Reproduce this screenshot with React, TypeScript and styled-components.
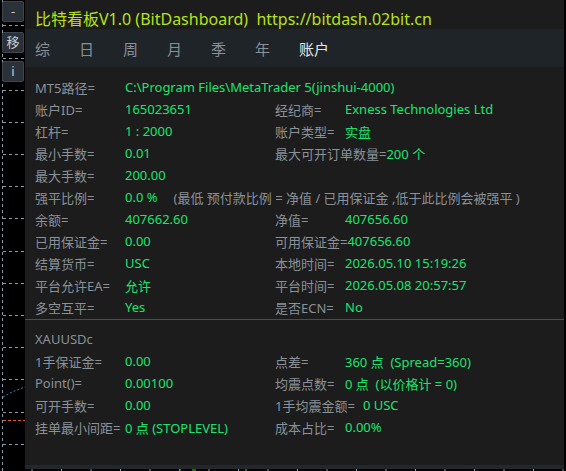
import React from "react";
import styled, { createGlobalStyle } from "styled-components";

const GlobalStyle = createGlobalStyle`
  html, body {
    margin: 0;
    padding: 0;
    background: #000;
  }
  body {
    font-family: "Noto Sans", "Noto Sans CJK SC", sans-serif;
  }
`;

type Pair = { label: string; value?: string; note?: string; gap?: number };
type Line = { left: Pair; right?: Pair; wide?: boolean };

const tabs = ["综", "日", "周", "月", "季", "年", "账户"];

const accountRows: Line[] = [
  { left: { label: "MT5路径=", value: "C:\\Program Files\\MetaTrader 5(jinshui-4000)" }, wide: true },
  { left: { label: "账户ID=", value: "165023651" }, right: { label: "经纪商=", value: "Exness Technologies Ltd" } },
  { left: { label: "杠杆=", value: "1 : 2000" }, right: { label: "账户类型=", value: "实盘" } },
  { left: { label: "最小手数=", value: "0.01" }, right: { label: "最大可开订单数量=", value: "200 个" } },
  { left: { label: "最大手数=", value: "200.00" } },
  {
    left: {
      label: "强平比例=",
      value: "0.0 %",
      note: "(最低 预付款比例 = 净值 / 已用保证金 ,低于此比例会被强平 )",
    },
    wide: true,
  },
  { left: { label: "余额=", value: "407662.60" }, right: { label: "净值=", value: "407656.60" } },
  { left: { label: "已用保证金=", value: "0.00" }, right: { label: "可用保证金=", value: "407656.60" } },
  { left: { label: "结算货币=", value: "USC" }, right: { label: "本地时间=", value: "2026.05.10 15:19:26" } },
  { left: { label: "平台允许EA=", value: "允许" }, right: { label: "平台时间=", value: "2026.05.08 20:57:57" } },
  { left: { label: "多空互平=", value: "Yes" }, right: { label: "是否ECN=", value: "No" } },
];

const symbolRows: Line[] = [
  { left: { label: "1手保证金=", value: "0.00" }, right: { label: "点差=", value: "360 点  (Spread=360)" } },
  { left: { label: "Point()=", value: "0.00100" }, right: { label: "均震点数=", value: "0 点  (以价格计 = 0)" } },
  { left: { label: "可开手数=", value: "0.00" }, right: { label: "1手均震金额=", value: "0 USC", gap: 8 } },
  { left: { label: "挂单最小间距=", value: "0 点 (STOPLEVEL)" }, right: { label: "成本占比=", value: "0.00%" } },
];

export default function App() {
  return (
    <>
      <GlobalStyle />
      <Chart>
        <ChartGrid />
        <SideTools>
          <ToolButton>-</ToolButton>
          <ToolButton $top={32}>移</ToolButton>
          <ToolButton $top={61}>i</ToolButton>
        </SideTools>
        <Panel>
          <Title>比特看板V1.0 (BitDashboard)  https://bitdash.02bit.cn</Title>
          <TabBar>
            {tabs.map((tab) => (
              <Tab key={tab} $active={tab === "账户"}>
                {tab}
              </Tab>
            ))}
          </TabBar>
          <Body>
            <Section>
              {accountRows.map((row, i) => (
                <InfoRow key={i} line={row} />
              ))}
            </Section>
            <Divider />
            <Section>
              <Row>
                <Label>XAUUSDc</Label>
              </Row>
              {symbolRows.map((row, i) => (
                <InfoRow key={i} line={row} />
              ))}
            </Section>
          </Body>
          <Footer />
        </Panel>
      </Chart>
    </>
  );
}

function InfoRow({ line }: { line: Line }) {
  const { left, right, wide } = line;
  return (
    <Row>
      <Cell $wide={wide}>
        <Label $min={90}>{left.label}</Label>
        <Value>{left.value}</Value>
        {left.note && <Note>{left.note}</Note>}
      </Cell>
      {right && (
        <Cell>
          <Label $min={70}>{right.label}</Label>
          <Value style={right.gap ? { marginLeft: right.gap } : undefined}>
            {right.value}
          </Value>
        </Cell>
      )}
    </Row>
  );
}

function ChartGrid() {
  const rows = [25, 58, 90, 122, 154, 186, 218, 251, 283, 315, 347, 379, 412, 444];
  const ticks = Array.from({ length: 19 }, (_, i) => 32 + i * 29.5);
  return (
    <GridSvg width="566" height="471" viewBox="0 0 566 471">
      <line x1="2.5" y1="0" x2="2.5" y2="471" stroke="#8a9aa8" strokeDasharray="3 3" />
      {rows.map((y) => (
        <line key={y} x1="3" y1={y + 0.5} x2="25" y2={y + 0.5} stroke="#8a9aa8" strokeDasharray="3 3" />
      ))}
      <polyline points="3,397 10,393 17,390 25,387" fill="none" stroke="#2f7fd6" strokeDasharray="2 2" />
      <line x1="3" y1="420.5" x2="25" y2="420.5" stroke="#e8502a" strokeDasharray="3 2" />
      {ticks.map((x) => (
        <line key={x} x1={x} y1="469" x2={x} y2="471" stroke="#8a9aa8" />
      ))}
      {[180, 193, 195, 246].map((x) => (
        <line key={x} x1={x} y1="467" x2={x} y2="471" stroke="#22e01a" />
      ))}
    </GridSvg>
  );
}

const Chart = styled.div`
  position: relative;
  width: 566px;
  height: 471px;
  background: #000;
  overflow: hidden;
`;

const GridSvg = styled.svg`
  position: absolute;
  left: 0;
  top: 0;
`;

const SideTools = styled.div`
  position: absolute;
  left: 2px;
  top: 0;
  width: 22px;
`;

const ToolButton = styled.div<{ $top?: number }>`
  position: absolute;
  left: 0;
  top: ${(p) => p.$top ?? 1}px;
  width: 22px;
  height: 21px;
  box-sizing: border-box;
  display: flex;
  align-items: center;
  justify-content: center;
  background: #2a3139;
  border: 1px solid #3d464f;
  border-radius: 2px;
  color: #c9ced3;
  font-size: 13px;
  line-height: 1;
`;

const Panel = styled.div`
  position: absolute;
  left: 25px;
  top: 0;
  width: 539px;
  height: 469px;
  display: flex;
  flex-direction: column;
  background: #1c1c1c;
`;

const Title = styled.div`
  height: 29px;
  padding: 6px 0 0 10px;
  box-sizing: border-box;
  color: #b6e21e;
  font-size: 16px;
  line-height: 26px;
  white-space: pre;
`;

const TabBar = styled.div`
  height: 38px;
  display: flex;
  align-items: center;
  padding-left: 10px;
  background: #1f2429;
`;

const Tab = styled.div<{ $active?: boolean }>`
  width: 44px;
  color: ${(p) => (p.$active ? "#e4e7ea" : "#899097")};
  font-size: 15px;
  white-space: nowrap;
`;

const Body = styled.div`
  flex: 1;
  padding-top: 9px;
`;

const Section = styled.div`
  display: flex;
  flex-direction: column;
  padding-left: 10px;
`;

const Row = styled.div`
  height: 22px;
  display: flex;
  align-items: center;
  font-size: 13px;
  white-space: pre;
`;

const Cell = styled.div<{ $wide?: boolean }>`
  display: flex;
  align-items: center;
  width: ${(p) => (p.$wide ? "auto" : "240px")};
`;

const Label = styled.span<{ $min?: number }>`
  min-width: ${(p) => p.$min ?? 0}px;
  color: #8a9199;
`;

const Value = styled.span`
  color: #1ee36f;
`;

const Note = styled.span`
  margin-left: 16px;
  color: #8a9199;
`;

const Divider = styled.div`
  height: 1px;
  margin: 1px 0 8px;
  background: #4a4e53;
`;

const Footer = styled.div`
  height: 4px;
  background: #22272b;
`;
